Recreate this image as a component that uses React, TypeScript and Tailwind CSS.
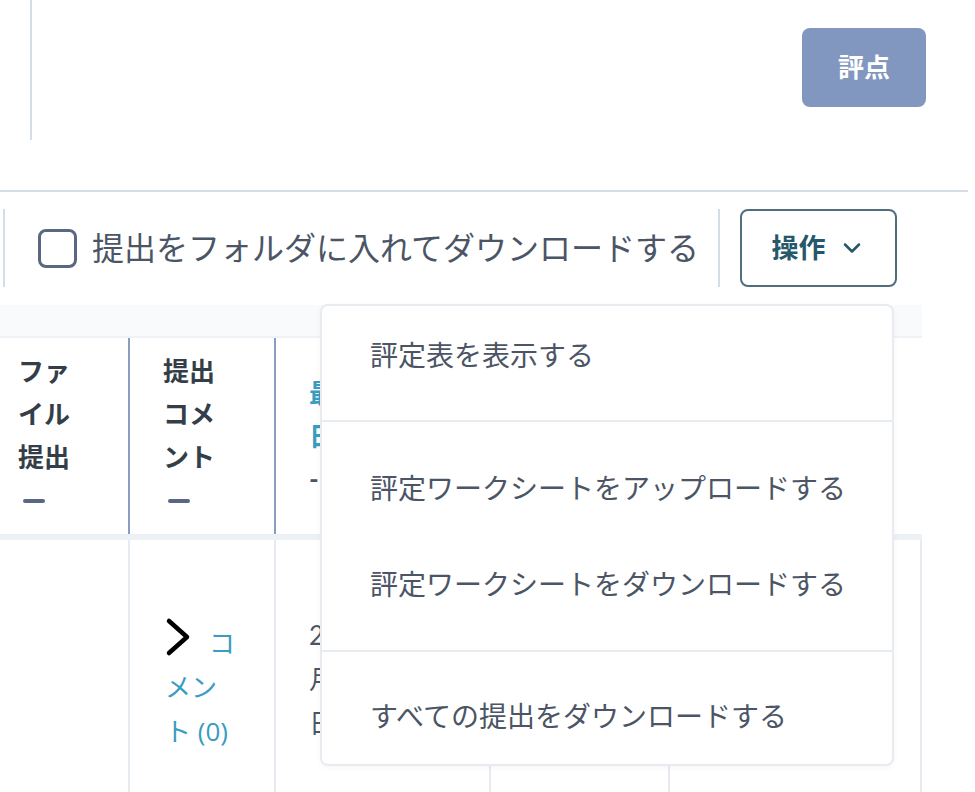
import { ChevronDown } from 'lucide-react'

const font = "font-['Lato','Noto_Sans_CJK_JP',sans-serif]"

const menuSections = [
  { className: 'pt-[1px] pb-[17px]', items: ['評定表を表示する'] },
  {
    className: 'py-[18px] border-t-2 border-[#e8ecf1]',
    items: ['評定ワークシートをアップロードする', '評定ワークシートをダウンロードする'],
  },
  { className: 'pt-[16px] pb-[2px] border-t-2 border-[#e8ecf1]', items: ['すべての提出をダウンロードする'] },
]

function HeaderCell({
  lines,
  width,
  pl,
  blue,
  last,
}: {
  lines: string[]
  width: string
  pl: string
  blue?: boolean
  last?: boolean
}) {
  return (
    <div className={`${width} ${pl} h-full flex flex-col justify-center ${last ? '' : 'border-r-2 border-[#8a9cc0]'}`}>
      {lines.map((l, i) =>
        l === '—' ? (
          <div key={i} className="h-[43px] flex items-center">
            <div className="ml-[5px] w-[22px] h-[4px] rounded-full bg-[#5b6782]" />
          </div>
        ) : (
          <div
            key={i}
            className={`text-[26px] leading-[43px] font-bold whitespace-nowrap ${
              l === '-' ? 'text-[#4b5565]' : blue ? 'text-[#3a9cc0]' : 'text-[#333e48]'
            }`}
          >
            {l}
          </div>
        )
      )}
    </div>
  )
}

export default function App() {
  return (
    <div className={`relative w-[975px] h-[792px] overflow-hidden bg-white ${font}`}>
      {/* top */}
      <div className="flex h-[190px] items-start">
        <div className="ml-[30px] w-[2px] h-[140px] bg-[#d5dde8]" />
        <div className="flex-1" />
        <button className="mt-[28px] mr-[49px] w-[124px] h-[79px] rounded-[8px] bg-[#8197c0] text-white text-[26px] font-bold">
          評点
        </button>
      </div>
      <div className="w-[968px] h-[2px] bg-[#d5dde8]" />

      {/* toolbar */}
      <div className="pt-[17px] pb-[18px]">
        <div className="flex h-[78px] items-center">
          <div className="w-[718px] h-full flex items-center">
            <div className="ml-[3px] w-[2px] h-full bg-[#d5dde8]" />
            <div className="ml-[33px] w-[39px] h-[39px] rounded-[8px] border-[3px] border-[#5b6782]" />
            <span className="ml-[15px] text-[32px] text-[#4b5565] whitespace-nowrap">
              提出をフォルダに入れてダウンロードする
            </span>
          </div>
          <div className="w-[2px] h-full bg-[#d5dde8]" />
          <button className="ml-[20px] w-[157px] h-[78px] rounded-[8px] border-2 border-[#4f6f7c] flex items-center justify-center gap-[12px] text-[27px] font-bold text-[#25586a]">
            操作
            <ChevronDown size={28} strokeWidth={2.2} />
          </button>
        </div>
      </div>

      {/* table */}
      <div className="w-[922px]">
        <div className="h-[33px] bg-[#f9fafb] border-b-2 border-[#eef1f5]" />
        <div className="flex h-[196px]">
          <HeaderCell width="w-[130px]" pl="pl-[18px]" lines={['ファ', 'イル', '提出', '—']} />
          <HeaderCell width="w-[146px]" pl="pl-[33px]" lines={['提出', 'コメ', 'ント', '—']} />
          <HeaderCell width="w-[215px]" pl="pl-[33px]" blue lines={['最終更新', '日時', '-']} />
          <HeaderCell width="w-[179px]" pl="pl-[33px]" lines={['評点']} />
          <HeaderCell width="w-[252px]" pl="pl-[33px]" last lines={['状態']} />
        </div>
        <div className="h-[6px] bg-[#edf1f5]" />
        <div className="flex h-[260px] text-[26px] leading-[44px]">
          <div className="w-[130px] border-r-2 border-[#e6ebf1]" />
          <div className="w-[146px] pl-[35px] pt-[77px] border-r-2 border-[#e6ebf1] text-[#3a9cc0]">
            <div className="flex h-[48px]">
              <svg width="26" height="40" viewBox="0 0 26 40" fill="none" stroke="#000" strokeWidth="4.5" strokeLinecap="round" strokeLinejoin="round">
                <polyline points="4,4 22,20 4,36" />
              </svg>
              <span className="ml-[18px] mt-[4px]">コ</span>
            </div>
            <div>メン</div>
            <div className="whitespace-nowrap font-['Open_Sans','Noto_Sans_CJK_JP',sans-serif]">ト (0)</div>
          </div>
          <div className="w-[215px] pl-[33px] pt-[73px] border-r-2 border-[#e6ebf1] text-[#4b5565] whitespace-nowrap">
            <div>2024年10</div>
            <div>月15</div>
            <div>日 10:32</div>
          </div>
          <div className="w-[179px] border-r-2 border-[#e6ebf1]" />
          <div className="w-[252px] border-r-2 border-[#e6ebf1]" />
        </div>
      </div>

      {/* dropdown menu */}
      <div className="absolute left-[320px] top-[304px] w-[574px] h-[462px] rounded-[8px] border-2 border-[#e8ecf1] bg-white shadow-[0_2px_6px_rgba(0,0,0,0.04)] overflow-hidden">
        {menuSections.map((s, i) => (
          <div key={i} className={s.className}>
            {s.items.map((item) => (
              <div key={item} className="h-[96px] flex items-center pl-[48px] text-[28px] text-[#4b5565] whitespace-nowrap">
                {item}
              </div>
            ))}
          </div>
        ))}
      </div>
    </div>
  )
}
